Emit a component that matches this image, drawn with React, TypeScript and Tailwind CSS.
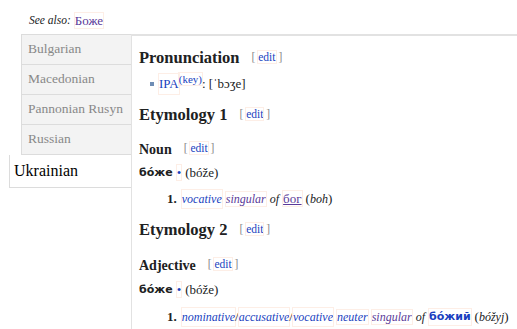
import React from "react";

const serif = { fontFamily: '"Liberation Serif", "DejaVu Serif", serif' };
const sans = { fontFamily: '"DejaVu Sans", "Noto Sans", sans-serif' };

function L({ children, visited, italic, bold, under }: { children: React.ReactNode; visited?: boolean; italic?: boolean; bold?: boolean; under?: boolean }) {
  return (
    <span
      className={`outline outline-1 outline-[#fdeee6] ${visited ? "text-[#5b3a99]" : "text-[#1a3fc0]"} ${italic ? "text-[12px] italic" : ""} ${bold ? "font-bold" : ""} ${under ? "underline" : ""}`}
    >
      {children}
    </span>
  );
}

function Edit() {
  return (
    <span className="ml-[12px] text-[11.5px] font-normal text-[#888]">
      [ <L>edit</L> ]
    </span>
  );
}

function Headword() {
  return (
    <div className="flex h-[18px] items-center">
      <span className="text-[11px] font-bold" style={sans}>
        бо́же
      </span>
      <span className="ml-[4px]">
        <L>•</L>
      </span>
      <span className="ml-[4px]">(bóže)</span>
    </div>
  );
}

const tabs = ["Bulgarian", "Macedonian", "Pannonian Rusyn", "Russian"];

export default function App() {
  return (
    <div className="h-[329px] w-[517px] overflow-hidden bg-white text-[#202122]" style={serif}>
      {/* See also */}
      <div className="flex h-[34px] items-center pl-[29px] pt-[8px] text-[13px]">
        <span className="text-[11.5px] italic">See also:</span>
        <span className="ml-[4px]">
          <span className="outline outline-1 outline-[#fdeee6] text-[#5b3a99]">Боже</span>
        </span>
      </div>

      <div className="flex">
        {/* tabs */}
        <div className="w-[131px] shrink-0">
          <div className="ml-[21px] border-l border-t border-[#dcdcdc] bg-[#f3f3f3]">
            {tabs.map((t) => (
              <div key={t} className="flex h-[30px] items-center border-b border-[#dcdcdc] pl-[6px] text-[13.5px] text-[#888]">
                {t}
              </div>
            ))}
          </div>
          <div className="ml-[9px] flex h-[33px] items-center border-b border-l border-[#dcdcdc] bg-white pl-[4px] text-[16px] text-black">
            Ukrainian
          </div>
        </div>

        {/* content */}
        <div className="h-[295px] flex-1 border-l border-t-2 border-[#e2e2e2] pl-[7px] text-[13px]">
          <div className="mt-[12px] flex h-[20px] items-center text-[16.5px] font-bold">
            Pronunciation <Edit />
          </div>
          <div className="mt-[7px] flex h-[18px] items-center pl-[11px]">
            <span className="mr-[5px] inline-block h-[4px] w-[4px] bg-[#6f8db5]" />
            <L>IPA</L>
            <sup className="text-[11px]">
              <L>(key)</L>
            </sup>
            <span>: [ˈbɔʒe]</span>
          </div>
          <div className="mt-[12px] flex h-[20px] items-center text-[16.5px] font-bold">
            Etymology 1 <Edit />
          </div>
          <div className="mt-[15px] flex h-[18px] items-center text-[14px] font-bold">
            Noun <Edit />
          </div>
          <div className="mt-[6px]">
            <Headword />
          </div>
          <div className="mt-[8px] flex h-[18px] items-center pl-[28px]">
            <span className="mr-[5px] font-bold">1.</span>
            <L italic>vocative</L>
            <span className="ml-[4px]">
              <L italic visited>singular</L>
            </span>
            <span className="ml-[4px] text-[12px] italic">of</span>
            <span className="ml-[4px]">
              <L visited under>бог</L>
            </span>
            <span className="ml-[4px]">
              (<i className="text-[12px]">boh</i>)
            </span>
          </div>
          <div className="mt-[12px] flex h-[20px] items-center text-[16.5px] font-bold">
            Etymology 2 <Edit />
          </div>
          <div className="mt-[16px] flex h-[18px] items-center text-[14px] font-bold">
            Adjective <Edit />
          </div>
          <div className="mt-[7px]">
            <Headword />
          </div>
          <div className="mt-[9px] flex h-[18px] items-center whitespace-nowrap pl-[28px]">
            <span className="mr-[5px] font-bold">1.</span>
            <L italic>nominative</L>/<L italic>accusative</L>/<L italic>vocative</L>
            <span className="ml-[4px]">
              <L italic>neuter</L>
            </span>
            <span className="ml-[4px]">
              <L italic visited>singular</L>
            </span>
            <span className="ml-[4px] text-[12px] italic">of</span>
            <span className="ml-[4px] text-[11px] font-bold text-[#1a3fc0] outline outline-1 outline-[#fdeee6]" style={sans}>
              бо́жий
            </span>
            <span className="ml-[4px]">
              (<i className="text-[12px]">bóžyj</i>)
            </span>
          </div>
        </div>
      </div>
    </div>
  );
}
